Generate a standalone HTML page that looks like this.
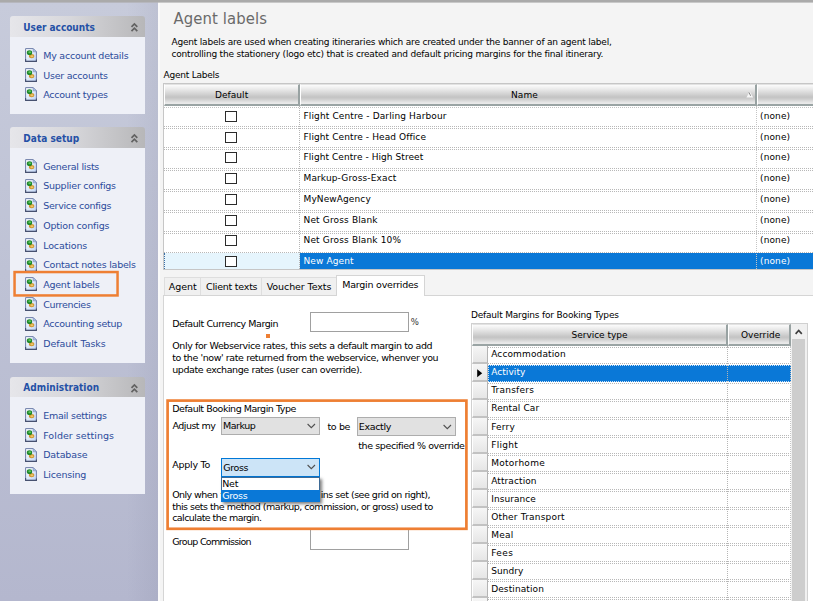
<!DOCTYPE html>
<html lang="en"><head><meta charset="utf-8"><title>Agent labels</title>
<style>
html,body{margin:0;padding:0}
body{width:813px;height:601px;overflow:hidden;position:relative;background:#fff;font-family:"DejaVu Sans","Liberation Sans",sans-serif;font-size:9px}
div{position:absolute;box-sizing:border-box}
.t{white-space:nowrap}
svg{position:absolute;overflow:visible}
.hd{background:linear-gradient(to bottom,#fbfbfb 0%,#efefef 16%,#d4d4d4 46%,#c3c3c3 64%,#cdcdcd 74%,#e6e6e6 92%,#ebebeb 100%);border-top:1px solid #e2e2e2;border-right:2px solid #98a2a2;border-bottom:2px solid #9aa4a4;border-left:1px solid #fff}
.rh{background:linear-gradient(to bottom,#f6f6f6,#e6e6e6);border-right:1px solid #b4b4b4;border-bottom:2px solid #c2c2c2;border-left:1px solid #fff}
.combo{background:#e1e1e1;border:1px solid #adadad}
.inp{background:#fff;border:1px solid #a0a0a0}
</style></head><body>
<svg width="0" height="0" style="left:0;top:0"><defs><linearGradient id="pg" x1="0" y1="0" x2="1" y2="1"><stop offset="0" stop-color="#ffffff"/><stop offset="1" stop-color="#bfd5f6"/></linearGradient></defs></svg>

<div style="left:0px;top:0px;width:813px;height:2px;background:#aaaaaa"></div>
<div style="left:0px;top:3px;width:158px;height:598px;background:linear-gradient(to right,rgba(0,0,0,0) 80%,rgba(40,40,80,.06) 100%),linear-gradient(to bottom,#c7cbdb 0%,#bec2d5 45%,#b4b7ce 100%)"></div>
<div style="left:158px;top:3px;width:655px;height:598px;background:#f4f4f4"></div>
<div style="left:158px;top:3px;width:2px;height:598px;background:#fafafa"></div>
<div style="left:0px;top:2px;width:158px;height:1px;background:#b6b7be"></div>
<div style="left:158px;top:2px;width:655px;height:1px;background:#c8c8c8"></div>
<div style="left:10px;top:16px;width:135px;height:21px;background:linear-gradient(to right,#e6e6ea 0%,#d7d7db 45%,#b7b7b9 100%);border-radius:3px 3px 0 0"></div>
<div style="left:10px;top:37px;width:135px;height:77px;background:#eef0f7"></div>
<div class="t" style="left:23.3px;top:20.8px;line-height:14px;font-size:10px;color:#2450a6;font-weight:bold;font-family:'DejaVu Sans Condensed','Liberation Sans',sans-serif;letter-spacing:-0.02px;">User accounts</div>
<svg style="left:130.5px;top:22.5px" width="7" height="9" viewBox="0 0 7 9"><path d="M0.5 3.9L3.4 1L6.3 3.9M0.5 8.1L3.4 5.2L6.3 8.1" fill="none" stroke="#626262" stroke-width="1.7"/></svg>
<svg style="left:25px;top:48px" width="12" height="14" viewBox="0 0 12 14">
<path d="M0.6 0.6H8.2L11.4 3.8V13.4H0.6Z" fill="url(#pg)" stroke="#6f7ea8" stroke-width="1"/>
<path d="M0.6 11V13.4H11.4V11.5" fill="none" stroke="#47516f" stroke-width="1.1"/>
<path d="M8.2 0.6V3.8H11.4Z" fill="#b3ccf3" stroke="#7f8fb8" stroke-width=".7"/>
<ellipse cx="6.6" cy="8.1" rx="2.7" ry="2.2" fill="#cf9732"/>
<ellipse cx="6.9" cy="8.3" rx="1.5" ry="1" fill="#ecc66b"/>
<ellipse cx="4.5" cy="4.7" rx="2.7" ry="2.4" fill="#21882b"/>
<ellipse cx="4.7" cy="4.3" rx="1.4" ry="1" fill="#5fc55d"/>
</svg>
<div class="t" style="left:43.2px;top:49.0px;line-height:14px;font-size:9.5px;color:#2b4b9b;letter-spacing:-0.23px;">My account details</div>
<svg style="left:25px;top:68px" width="12" height="14" viewBox="0 0 12 14">
<path d="M0.6 0.6H8.2L11.4 3.8V13.4H0.6Z" fill="url(#pg)" stroke="#6f7ea8" stroke-width="1"/>
<path d="M0.6 11V13.4H11.4V11.5" fill="none" stroke="#47516f" stroke-width="1.1"/>
<path d="M8.2 0.6V3.8H11.4Z" fill="#b3ccf3" stroke="#7f8fb8" stroke-width=".7"/>
<ellipse cx="6.6" cy="8.1" rx="2.7" ry="2.2" fill="#cf9732"/>
<ellipse cx="6.9" cy="8.3" rx="1.5" ry="1" fill="#ecc66b"/>
<ellipse cx="4.5" cy="4.7" rx="2.7" ry="2.4" fill="#21882b"/>
<ellipse cx="4.7" cy="4.3" rx="1.4" ry="1" fill="#5fc55d"/>
</svg>
<div class="t" style="left:43.2px;top:69.0px;line-height:14px;font-size:9.5px;color:#2b4b9b;letter-spacing:-0.22px;">User accounts</div>
<svg style="left:25px;top:87px" width="12" height="14" viewBox="0 0 12 14">
<path d="M0.6 0.6H8.2L11.4 3.8V13.4H0.6Z" fill="url(#pg)" stroke="#6f7ea8" stroke-width="1"/>
<path d="M0.6 11V13.4H11.4V11.5" fill="none" stroke="#47516f" stroke-width="1.1"/>
<path d="M8.2 0.6V3.8H11.4Z" fill="#b3ccf3" stroke="#7f8fb8" stroke-width=".7"/>
<ellipse cx="6.6" cy="8.1" rx="2.7" ry="2.2" fill="#cf9732"/>
<ellipse cx="6.9" cy="8.3" rx="1.5" ry="1" fill="#ecc66b"/>
<ellipse cx="4.5" cy="4.7" rx="2.7" ry="2.4" fill="#21882b"/>
<ellipse cx="4.7" cy="4.3" rx="1.4" ry="1" fill="#5fc55d"/>
</svg>
<div class="t" style="left:43.2px;top:88.0px;line-height:14px;font-size:9.5px;color:#2b4b9b;letter-spacing:-0.23px;">Account types</div>
<div style="left:10px;top:127px;width:135px;height:21px;background:linear-gradient(to right,#e6e6ea 0%,#d7d7db 45%,#b7b7b9 100%);border-radius:3px 3px 0 0"></div>
<div style="left:10px;top:148px;width:135px;height:215px;background:#eef0f7"></div>
<div class="t" style="left:23.3px;top:131.8px;line-height:14px;font-size:10px;color:#2450a6;font-weight:bold;font-family:'DejaVu Sans Condensed','Liberation Sans',sans-serif;letter-spacing:0.02px;">Data setup</div>
<svg style="left:130.5px;top:133.5px" width="7" height="9" viewBox="0 0 7 9"><path d="M0.5 3.9L3.4 1L6.3 3.9M0.5 8.1L3.4 5.2L6.3 8.1" fill="none" stroke="#626262" stroke-width="1.7"/></svg>
<svg style="left:25px;top:159px" width="12" height="14" viewBox="0 0 12 14">
<path d="M0.6 0.6H8.2L11.4 3.8V13.4H0.6Z" fill="url(#pg)" stroke="#6f7ea8" stroke-width="1"/>
<path d="M0.6 11V13.4H11.4V11.5" fill="none" stroke="#47516f" stroke-width="1.1"/>
<path d="M8.2 0.6V3.8H11.4Z" fill="#b3ccf3" stroke="#7f8fb8" stroke-width=".7"/>
<ellipse cx="6.6" cy="8.1" rx="2.7" ry="2.2" fill="#cf9732"/>
<ellipse cx="6.9" cy="8.3" rx="1.5" ry="1" fill="#ecc66b"/>
<ellipse cx="4.5" cy="4.7" rx="2.7" ry="2.4" fill="#21882b"/>
<ellipse cx="4.7" cy="4.3" rx="1.4" ry="1" fill="#5fc55d"/>
</svg>
<div class="t" style="left:43.2px;top:160.0px;line-height:14px;font-size:9.5px;color:#2b4b9b;letter-spacing:-0.27px;">General lists</div>
<svg style="left:25px;top:179px" width="12" height="14" viewBox="0 0 12 14">
<path d="M0.6 0.6H8.2L11.4 3.8V13.4H0.6Z" fill="url(#pg)" stroke="#6f7ea8" stroke-width="1"/>
<path d="M0.6 11V13.4H11.4V11.5" fill="none" stroke="#47516f" stroke-width="1.1"/>
<path d="M8.2 0.6V3.8H11.4Z" fill="#b3ccf3" stroke="#7f8fb8" stroke-width=".7"/>
<ellipse cx="6.6" cy="8.1" rx="2.7" ry="2.2" fill="#cf9732"/>
<ellipse cx="6.9" cy="8.3" rx="1.5" ry="1" fill="#ecc66b"/>
<ellipse cx="4.5" cy="4.7" rx="2.7" ry="2.4" fill="#21882b"/>
<ellipse cx="4.7" cy="4.3" rx="1.4" ry="1" fill="#5fc55d"/>
</svg>
<div class="t" style="left:43.2px;top:179.0px;line-height:14px;font-size:9.5px;color:#2b4b9b;letter-spacing:-0.22px;">Supplier configs</div>
<svg style="left:25px;top:198px" width="12" height="14" viewBox="0 0 12 14">
<path d="M0.6 0.6H8.2L11.4 3.8V13.4H0.6Z" fill="url(#pg)" stroke="#6f7ea8" stroke-width="1"/>
<path d="M0.6 11V13.4H11.4V11.5" fill="none" stroke="#47516f" stroke-width="1.1"/>
<path d="M8.2 0.6V3.8H11.4Z" fill="#b3ccf3" stroke="#7f8fb8" stroke-width=".7"/>
<ellipse cx="6.6" cy="8.1" rx="2.7" ry="2.2" fill="#cf9732"/>
<ellipse cx="6.9" cy="8.3" rx="1.5" ry="1" fill="#ecc66b"/>
<ellipse cx="4.5" cy="4.7" rx="2.7" ry="2.4" fill="#21882b"/>
<ellipse cx="4.7" cy="4.3" rx="1.4" ry="1" fill="#5fc55d"/>
</svg>
<div class="t" style="left:43.2px;top:199.0px;line-height:14px;font-size:9.5px;color:#2b4b9b;letter-spacing:-0.28px;">Service configs</div>
<svg style="left:25px;top:218px" width="12" height="14" viewBox="0 0 12 14">
<path d="M0.6 0.6H8.2L11.4 3.8V13.4H0.6Z" fill="url(#pg)" stroke="#6f7ea8" stroke-width="1"/>
<path d="M0.6 11V13.4H11.4V11.5" fill="none" stroke="#47516f" stroke-width="1.1"/>
<path d="M8.2 0.6V3.8H11.4Z" fill="#b3ccf3" stroke="#7f8fb8" stroke-width=".7"/>
<ellipse cx="6.6" cy="8.1" rx="2.7" ry="2.2" fill="#cf9732"/>
<ellipse cx="6.9" cy="8.3" rx="1.5" ry="1" fill="#ecc66b"/>
<ellipse cx="4.5" cy="4.7" rx="2.7" ry="2.4" fill="#21882b"/>
<ellipse cx="4.7" cy="4.3" rx="1.4" ry="1" fill="#5fc55d"/>
</svg>
<div class="t" style="left:43.2px;top:219.0px;line-height:14px;font-size:9.5px;color:#2b4b9b;letter-spacing:-0.19px;">Option configs</div>
<svg style="left:25px;top:238px" width="12" height="14" viewBox="0 0 12 14">
<path d="M0.6 0.6H8.2L11.4 3.8V13.4H0.6Z" fill="url(#pg)" stroke="#6f7ea8" stroke-width="1"/>
<path d="M0.6 11V13.4H11.4V11.5" fill="none" stroke="#47516f" stroke-width="1.1"/>
<path d="M8.2 0.6V3.8H11.4Z" fill="#b3ccf3" stroke="#7f8fb8" stroke-width=".7"/>
<ellipse cx="6.6" cy="8.1" rx="2.7" ry="2.2" fill="#cf9732"/>
<ellipse cx="6.9" cy="8.3" rx="1.5" ry="1" fill="#ecc66b"/>
<ellipse cx="4.5" cy="4.7" rx="2.7" ry="2.4" fill="#21882b"/>
<ellipse cx="4.7" cy="4.3" rx="1.4" ry="1" fill="#5fc55d"/>
</svg>
<div class="t" style="left:43.2px;top:239.0px;line-height:14px;font-size:9.5px;color:#2b4b9b;letter-spacing:-0.13px;">Locations</div>
<svg style="left:25px;top:258px" width="12" height="14" viewBox="0 0 12 14">
<path d="M0.6 0.6H8.2L11.4 3.8V13.4H0.6Z" fill="url(#pg)" stroke="#6f7ea8" stroke-width="1"/>
<path d="M0.6 11V13.4H11.4V11.5" fill="none" stroke="#47516f" stroke-width="1.1"/>
<path d="M8.2 0.6V3.8H11.4Z" fill="#b3ccf3" stroke="#7f8fb8" stroke-width=".7"/>
<ellipse cx="6.6" cy="8.1" rx="2.7" ry="2.2" fill="#cf9732"/>
<ellipse cx="6.9" cy="8.3" rx="1.5" ry="1" fill="#ecc66b"/>
<ellipse cx="4.5" cy="4.7" rx="2.7" ry="2.4" fill="#21882b"/>
<ellipse cx="4.7" cy="4.3" rx="1.4" ry="1" fill="#5fc55d"/>
</svg>
<div class="t" style="left:43.2px;top:258.0px;line-height:14px;font-size:9.5px;color:#2b4b9b;letter-spacing:-0.24px;">Contact notes labels</div>
<svg style="left:25px;top:277px" width="12" height="14" viewBox="0 0 12 14">
<path d="M0.6 0.6H8.2L11.4 3.8V13.4H0.6Z" fill="url(#pg)" stroke="#6f7ea8" stroke-width="1"/>
<path d="M0.6 11V13.4H11.4V11.5" fill="none" stroke="#47516f" stroke-width="1.1"/>
<path d="M8.2 0.6V3.8H11.4Z" fill="#b3ccf3" stroke="#7f8fb8" stroke-width=".7"/>
<ellipse cx="6.6" cy="8.1" rx="2.7" ry="2.2" fill="#cf9732"/>
<ellipse cx="6.9" cy="8.3" rx="1.5" ry="1" fill="#ecc66b"/>
<ellipse cx="4.5" cy="4.7" rx="2.7" ry="2.4" fill="#21882b"/>
<ellipse cx="4.7" cy="4.3" rx="1.4" ry="1" fill="#5fc55d"/>
</svg>
<div class="t" style="left:43.2px;top:278.0px;line-height:14px;font-size:9.5px;color:#2b4b9b;letter-spacing:-0.23px;">Agent labels</div>
<svg style="left:25px;top:297px" width="12" height="14" viewBox="0 0 12 14">
<path d="M0.6 0.6H8.2L11.4 3.8V13.4H0.6Z" fill="url(#pg)" stroke="#6f7ea8" stroke-width="1"/>
<path d="M0.6 11V13.4H11.4V11.5" fill="none" stroke="#47516f" stroke-width="1.1"/>
<path d="M8.2 0.6V3.8H11.4Z" fill="#b3ccf3" stroke="#7f8fb8" stroke-width=".7"/>
<ellipse cx="6.6" cy="8.1" rx="2.7" ry="2.2" fill="#cf9732"/>
<ellipse cx="6.9" cy="8.3" rx="1.5" ry="1" fill="#ecc66b"/>
<ellipse cx="4.5" cy="4.7" rx="2.7" ry="2.4" fill="#21882b"/>
<ellipse cx="4.7" cy="4.3" rx="1.4" ry="1" fill="#5fc55d"/>
</svg>
<div class="t" style="left:43.2px;top:298.0px;line-height:14px;font-size:9.5px;color:#2b4b9b;letter-spacing:-0.33px;">Currencies</div>
<svg style="left:25px;top:317px" width="12" height="14" viewBox="0 0 12 14">
<path d="M0.6 0.6H8.2L11.4 3.8V13.4H0.6Z" fill="url(#pg)" stroke="#6f7ea8" stroke-width="1"/>
<path d="M0.6 11V13.4H11.4V11.5" fill="none" stroke="#47516f" stroke-width="1.1"/>
<path d="M8.2 0.6V3.8H11.4Z" fill="#b3ccf3" stroke="#7f8fb8" stroke-width=".7"/>
<ellipse cx="6.6" cy="8.1" rx="2.7" ry="2.2" fill="#cf9732"/>
<ellipse cx="6.9" cy="8.3" rx="1.5" ry="1" fill="#ecc66b"/>
<ellipse cx="4.5" cy="4.7" rx="2.7" ry="2.4" fill="#21882b"/>
<ellipse cx="4.7" cy="4.3" rx="1.4" ry="1" fill="#5fc55d"/>
</svg>
<div class="t" style="left:43.2px;top:317.0px;line-height:14px;font-size:9.5px;color:#2b4b9b;letter-spacing:-0.23px;">Accounting setup</div>
<svg style="left:25px;top:336px" width="12" height="14" viewBox="0 0 12 14">
<path d="M0.6 0.6H8.2L11.4 3.8V13.4H0.6Z" fill="url(#pg)" stroke="#6f7ea8" stroke-width="1"/>
<path d="M0.6 11V13.4H11.4V11.5" fill="none" stroke="#47516f" stroke-width="1.1"/>
<path d="M8.2 0.6V3.8H11.4Z" fill="#b3ccf3" stroke="#7f8fb8" stroke-width=".7"/>
<ellipse cx="6.6" cy="8.1" rx="2.7" ry="2.2" fill="#cf9732"/>
<ellipse cx="6.9" cy="8.3" rx="1.5" ry="1" fill="#ecc66b"/>
<ellipse cx="4.5" cy="4.7" rx="2.7" ry="2.4" fill="#21882b"/>
<ellipse cx="4.7" cy="4.3" rx="1.4" ry="1" fill="#5fc55d"/>
</svg>
<div class="t" style="left:43.2px;top:337.0px;line-height:14px;font-size:9.5px;color:#2b4b9b;letter-spacing:-0.05px;">Default Tasks</div>
<div style="left:10px;top:377px;width:135px;height:20px;background:linear-gradient(to right,#e6e6ea 0%,#d7d7db 45%,#b7b7b9 100%);border-radius:3px 3px 0 0"></div>
<div style="left:10px;top:397px;width:135px;height:97px;background:#eef0f7"></div>
<div class="t" style="left:23.3px;top:381.2px;line-height:14px;font-size:10px;color:#2450a6;font-weight:bold;font-family:'DejaVu Sans Condensed','Liberation Sans',sans-serif;letter-spacing:0.02px;">Administration</div>
<svg style="left:130.5px;top:383.5px" width="7" height="9" viewBox="0 0 7 9"><path d="M0.5 3.9L3.4 1L6.3 3.9M0.5 8.1L3.4 5.2L6.3 8.1" fill="none" stroke="#626262" stroke-width="1.7"/></svg>
<svg style="left:25px;top:408px" width="12" height="14" viewBox="0 0 12 14">
<path d="M0.6 0.6H8.2L11.4 3.8V13.4H0.6Z" fill="url(#pg)" stroke="#6f7ea8" stroke-width="1"/>
<path d="M0.6 11V13.4H11.4V11.5" fill="none" stroke="#47516f" stroke-width="1.1"/>
<path d="M8.2 0.6V3.8H11.4Z" fill="#b3ccf3" stroke="#7f8fb8" stroke-width=".7"/>
<ellipse cx="6.6" cy="8.1" rx="2.7" ry="2.2" fill="#cf9732"/>
<ellipse cx="6.9" cy="8.3" rx="1.5" ry="1" fill="#ecc66b"/>
<ellipse cx="4.5" cy="4.7" rx="2.7" ry="2.4" fill="#21882b"/>
<ellipse cx="4.7" cy="4.3" rx="1.4" ry="1" fill="#5fc55d"/>
</svg>
<div class="t" style="left:43.2px;top:409.0px;line-height:14px;font-size:9.5px;color:#2b4b9b;letter-spacing:-0.26px;">Email settings</div>
<svg style="left:25px;top:428px" width="12" height="14" viewBox="0 0 12 14">
<path d="M0.6 0.6H8.2L11.4 3.8V13.4H0.6Z" fill="url(#pg)" stroke="#6f7ea8" stroke-width="1"/>
<path d="M0.6 11V13.4H11.4V11.5" fill="none" stroke="#47516f" stroke-width="1.1"/>
<path d="M8.2 0.6V3.8H11.4Z" fill="#b3ccf3" stroke="#7f8fb8" stroke-width=".7"/>
<ellipse cx="6.6" cy="8.1" rx="2.7" ry="2.2" fill="#cf9732"/>
<ellipse cx="6.9" cy="8.3" rx="1.5" ry="1" fill="#ecc66b"/>
<ellipse cx="4.5" cy="4.7" rx="2.7" ry="2.4" fill="#21882b"/>
<ellipse cx="4.7" cy="4.3" rx="1.4" ry="1" fill="#5fc55d"/>
</svg>
<div class="t" style="left:43.2px;top:429.0px;line-height:14px;font-size:9.5px;color:#2b4b9b;letter-spacing:0.04px;">Folder settings</div>
<svg style="left:25px;top:448px" width="12" height="14" viewBox="0 0 12 14">
<path d="M0.6 0.6H8.2L11.4 3.8V13.4H0.6Z" fill="url(#pg)" stroke="#6f7ea8" stroke-width="1"/>
<path d="M0.6 11V13.4H11.4V11.5" fill="none" stroke="#47516f" stroke-width="1.1"/>
<path d="M8.2 0.6V3.8H11.4Z" fill="#b3ccf3" stroke="#7f8fb8" stroke-width=".7"/>
<ellipse cx="6.6" cy="8.1" rx="2.7" ry="2.2" fill="#cf9732"/>
<ellipse cx="6.9" cy="8.3" rx="1.5" ry="1" fill="#ecc66b"/>
<ellipse cx="4.5" cy="4.7" rx="2.7" ry="2.4" fill="#21882b"/>
<ellipse cx="4.7" cy="4.3" rx="1.4" ry="1" fill="#5fc55d"/>
</svg>
<div class="t" style="left:43.2px;top:448.0px;line-height:14px;font-size:9.5px;color:#2b4b9b;letter-spacing:-0.13px;">Database</div>
<svg style="left:25px;top:467px" width="12" height="14" viewBox="0 0 12 14">
<path d="M0.6 0.6H8.2L11.4 3.8V13.4H0.6Z" fill="url(#pg)" stroke="#6f7ea8" stroke-width="1"/>
<path d="M0.6 11V13.4H11.4V11.5" fill="none" stroke="#47516f" stroke-width="1.1"/>
<path d="M8.2 0.6V3.8H11.4Z" fill="#b3ccf3" stroke="#7f8fb8" stroke-width=".7"/>
<ellipse cx="6.6" cy="8.1" rx="2.7" ry="2.2" fill="#cf9732"/>
<ellipse cx="6.9" cy="8.3" rx="1.5" ry="1" fill="#ecc66b"/>
<ellipse cx="4.5" cy="4.7" rx="2.7" ry="2.4" fill="#21882b"/>
<ellipse cx="4.7" cy="4.3" rx="1.4" ry="1" fill="#5fc55d"/>
</svg>
<div class="t" style="left:43.2px;top:468.0px;line-height:14px;font-size:9.5px;color:#2b4b9b;letter-spacing:-0.19px;">Licensing</div>
<svg style="left:0;top:0" width="813" height="601"><rect x="14.55" y="272.05" width="103" height="23.4" fill="none" stroke="#ee7f33" stroke-width="2.5"/></svg>
<div class="t" style="left:173.4px;top:6.6px;line-height:24px;font-size:16.5px;color:#6a6a6a;font-family:'DejaVu Sans Condensed','Liberation Sans',sans-serif;letter-spacing:0.12px;">Agent labels</div>
<div class="t" style="left:171.5px;top:35.2px;line-height:14px;letter-spacing:-0.20px;">Agent labels are used when creating itineraries which are created under the banner of an agent label,</div>
<div class="t" style="left:171.5px;top:47.2px;line-height:14px;letter-spacing:-0.20px;">controlling the stationery (logo etc) that is created and default pricing margins for the final itinerary.</div>
<div class="t" style="left:163.5px;top:67.5px;line-height:14px;letter-spacing:-0.22px;">Agent Labels</div>
<div style="left:163px;top:83px;width:660px;height:187px;background:#fff;border:1px solid #c6c6c6"></div>
<div style="left:225px;top:111px;width:12px;height:11px;background:#fff;border:1px solid #2b2b2b"></div>
<div class="t" style="left:303.5px;top:109.0px;line-height:14px;letter-spacing:0.13px;">Flight Centre - Darling Harbour</div>
<div class="t" style="left:760.0px;top:109.0px;line-height:14px;letter-spacing:0.12px;">(none)</div>
<div style="left:225px;top:132px;width:12px;height:11px;background:#fff;border:1px solid #2b2b2b"></div>
<div class="t" style="left:303.5px;top:129.5px;line-height:14px;letter-spacing:0.10px;">Flight Centre - Head Office</div>
<div class="t" style="left:760.0px;top:129.5px;line-height:14px;letter-spacing:0.12px;">(none)</div>
<div style="left:225px;top:152px;width:12px;height:11px;background:#fff;border:1px solid #2b2b2b"></div>
<div class="t" style="left:303.5px;top:150.3px;line-height:14px;letter-spacing:0.07px;">Flight Centre - High Street</div>
<div class="t" style="left:760.0px;top:150.3px;line-height:14px;letter-spacing:0.12px;">(none)</div>
<div style="left:225px;top:173px;width:12px;height:11px;background:#fff;border:1px solid #2b2b2b"></div>
<div class="t" style="left:303.5px;top:171.0px;line-height:14px;letter-spacing:0.13px;">Markup-Gross-Exact</div>
<div class="t" style="left:760.0px;top:171.0px;line-height:14px;letter-spacing:0.12px;">(none)</div>
<div style="left:225px;top:194px;width:12px;height:11px;background:#fff;border:1px solid #2b2b2b"></div>
<div class="t" style="left:303.5px;top:191.8px;line-height:14px;letter-spacing:0.11px;">MyNewAgency</div>
<div class="t" style="left:760.0px;top:191.8px;line-height:14px;letter-spacing:0.12px;">(none)</div>
<div style="left:225px;top:215px;width:12px;height:11px;background:#fff;border:1px solid #2b2b2b"></div>
<div class="t" style="left:303.5px;top:212.5px;line-height:14px;letter-spacing:0.15px;">Net Gross Blank</div>
<div class="t" style="left:760.0px;top:212.5px;line-height:14px;letter-spacing:0.12px;">(none)</div>
<div style="left:225px;top:235px;width:12px;height:11px;background:#fff;border:1px solid #2b2b2b"></div>
<div class="t" style="left:303.5px;top:233.2px;line-height:14px;letter-spacing:0.15px;">Net Gross Blank 10%</div>
<div class="t" style="left:760.0px;top:233.2px;line-height:14px;letter-spacing:0.12px;">(none)</div>
<div style="left:164px;top:253px;width:136px;height:16px;background:#e6f5fd"></div>
<div style="left:300px;top:253px;width:513px;height:16px;background:#0a78d7"></div>
<div style="left:225px;top:256px;width:12px;height:11px;background:#fff;border:1px solid #2b2b2b"></div>
<div class="t" style="left:303.5px;top:253.6px;line-height:14px;color:#fff;letter-spacing:0.12px;">New Agent</div>
<div class="t" style="left:760.0px;top:253.6px;line-height:14px;color:#fff;letter-spacing:0.12px;">(none)</div>
<div style="left:164px;top:107px;width:649px;height:1px;border-top:1px dotted #c4c4c4"></div>
<div style="left:164px;top:126px;width:649px;height:1px;border-top:1px dotted #b8b8b8"></div>
<div style="left:164px;top:128px;width:649px;height:1px;border-top:1px dotted #b8b8b8"></div>
<div style="left:164px;top:147px;width:649px;height:1px;border-top:1px dotted #b8b8b8"></div>
<div style="left:164px;top:149px;width:649px;height:1px;border-top:1px dotted #b8b8b8"></div>
<div style="left:164px;top:168px;width:649px;height:1px;border-top:1px dotted #b8b8b8"></div>
<div style="left:164px;top:170px;width:649px;height:1px;border-top:1px dotted #b8b8b8"></div>
<div style="left:164px;top:189px;width:649px;height:1px;border-top:1px dotted #b8b8b8"></div>
<div style="left:164px;top:191px;width:649px;height:1px;border-top:1px dotted #b8b8b8"></div>
<div style="left:164px;top:210px;width:649px;height:1px;border-top:1px dotted #b8b8b8"></div>
<div style="left:164px;top:212px;width:649px;height:1px;border-top:1px dotted #b8b8b8"></div>
<div style="left:164px;top:231px;width:649px;height:1px;border-top:1px dotted #b8b8b8"></div>
<div style="left:164px;top:233px;width:649px;height:1px;border-top:1px dotted #b8b8b8"></div>
<div style="left:164px;top:252px;width:649px;height:1px;border-top:1px dotted #b8b8b8"></div>
<div style="left:299px;top:106px;width:1px;height:163px;border-left:1px dotted #b5b5b5"></div>
<div style="left:756px;top:106px;width:1px;height:163px;border-left:1px dotted #c5c5c5"></div>
<div style="left:164px;top:253px;width:1px;height:16px;border-left:1px dotted #3a6ea5"></div>
<div class="hd" style="left:164px;top:84px;width:136px;height:22px"></div>
<div class="hd" style="left:300px;top:84px;width:457px;height:22px"></div>
<div class="hd" style="left:757px;top:84px;width:70px;height:22px"></div>
<div class="t" style="left:215.1px;top:87.5px;line-height:14px;letter-spacing:0.03px;">Default</div>
<div class="t" style="left:511.0px;top:87.5px;line-height:14px;letter-spacing:0.11px;">Name</div>
<svg style="left:746px;top:91px" width="8" height="7" viewBox="0 0 8 7"><path d="M3.8 0.6L7.2 6.6H0.4Z" fill="#f6f6f6"/><path d="M3 1.4L4.6 4.8" fill="none" stroke="#8a8a8a" stroke-width="1"/></svg>
<div style="left:163px;top:295px;width:660px;height:320px;background:#fff;border:1px solid #d5d5d5"></div>
<div style="left:164px;top:277px;width:37px;height:18px;background:#f0f0f0;border:1px solid #dedede;border-bottom:none"></div>
<div class="t" style="left:168.7px;top:280.0px;line-height:14px;font-size:9.5px;letter-spacing:-0.04px;">Agent</div>
<div style="left:200px;top:277px;width:62px;height:18px;background:#f0f0f0;border:1px solid #dedede;border-bottom:none"></div>
<div class="t" style="left:206.1px;top:280.0px;line-height:14px;font-size:9.5px;letter-spacing:-0.25px;">Client texts</div>
<div style="left:261px;top:277px;width:76px;height:18px;background:#f0f0f0;border:1px solid #dedede;border-bottom:none"></div>
<div class="t" style="left:266.7px;top:280.0px;line-height:14px;font-size:9.5px;letter-spacing:-0.09px;">Voucher Texts</div>
<div style="left:336px;top:275px;width:89px;height:21px;background:#fff;border:1px solid #d5d5d5;border-bottom:none"></div>
<div class="t" style="left:342.3px;top:278.0px;line-height:14px;font-size:9.5px;letter-spacing:-0.24px;">Margin overrides</div>
<div class="t" style="left:172.2px;top:317.0px;line-height:14px;font-size:9.5px;letter-spacing:-0.44px;">Default Currency Margin</div>
<div class="inp" style="left:310px;top:312px;width:99px;height:20px"></div>
<div class="t" style="left:410.7px;top:315.0px;line-height:14px;font-size:9.5px;color:#333;font-family:'DejaVu Sans Condensed','Liberation Sans',sans-serif;letter-spacing:-0.23px;letter-spacing:0;">%</div>
<div style="left:266px;top:334px;width:4px;height:4px;background:#ee7f33"></div>
<div class="t" style="left:172.2px;top:339.0px;line-height:14px;font-size:9.5px;letter-spacing:-0.40px;">Only for Webservice rates, this sets a default margin to add</div>
<div class="t" style="left:172.2px;top:351.0px;line-height:14px;font-size:9.5px;letter-spacing:-0.41px;">to the 'now' rate returned from the webservice, whenver you</div>
<div class="t" style="left:172.2px;top:363.0px;line-height:14px;font-size:9.5px;letter-spacing:-0.40px;">update exchange rates (user can override).</div>
<div class="t" style="left:172.2px;top:402.0px;line-height:14px;font-size:9.5px;letter-spacing:-0.47px;">Default Booking Margin Type</div>
<div class="t" style="left:172.5px;top:419.0px;line-height:14px;font-size:9.5px;letter-spacing:-0.53px;">Adjust my</div>
<div class="combo" style="left:221px;top:417px;width:99px;height:18px"></div>
<div class="t" style="left:223.0px;top:419.0px;line-height:14px;font-size:9.5px;letter-spacing:-0.48px;">Markup</div>
<svg style="left:306px;top:423px" width="10" height="6" viewBox="0 0 10 6"><path d="M1.6 1L5.3 4.7L9 1" fill="none" stroke="#505050" stroke-width="1.1"/></svg>
<div class="t" style="left:327.5px;top:420.0px;line-height:14px;font-size:9.5px;letter-spacing:-0.37px;">to be</div>
<div class="combo" style="left:357px;top:417px;width:99px;height:19px"></div>
<div class="t" style="left:358.8px;top:420.0px;line-height:14px;font-size:9.5px;letter-spacing:-0.34px;">Exactly</div>
<svg style="left:442px;top:423.5px" width="10" height="6" viewBox="0 0 10 6"><path d="M1.6 1L5.3 4.7L9 1" fill="none" stroke="#505050" stroke-width="1.1"/></svg>
<div class="t" style="left:358.2px;top:439.0px;line-height:14px;font-size:9.5px;letter-spacing:-0.39px;">the specified % override</div>
<div class="t" style="left:172.3px;top:458.0px;line-height:14px;font-size:9.5px;letter-spacing:-0.26px;">Apply To</div>
<div class="t" style="left:172.2px;top:488.0px;line-height:14px;font-size:9.5px;letter-spacing:-0.57px;">Only when</div>
<div class="t" style="left:220.5px;top:488.0px;line-height:14px;font-size:9.5px;letter-spacing:-0.23px;">there are no marg</div>
<div class="t" style="left:320.7px;top:488.0px;line-height:14px;font-size:9.5px;letter-spacing:-0.49px;">ins set (see grid on right),</div>
<div class="t" style="left:172.2px;top:500.0px;line-height:14px;font-size:9.5px;letter-spacing:-0.50px;">this sets the method (markup, commission, or gross) used to</div>
<div class="t" style="left:172.2px;top:511.0px;line-height:14px;font-size:9.5px;letter-spacing:-0.56px;">calculate the margin.</div>
<div class="t" style="left:172.2px;top:535.0px;line-height:14px;font-size:9.5px;letter-spacing:-0.70px;">Group Commission</div>
<div class="inp" style="left:310px;top:529px;width:99px;height:21px"></div>
<svg style="left:0;top:0" width="813" height="601"><rect x="167.6" y="400.6" width="298.8" height="128.2" fill="none" stroke="#ee7f33" stroke-width="2.7"/></svg>
<div style="left:221px;top:458px;width:99px;height:19px;background:#cce4f7;border:1px solid #0078d7"></div>
<div class="t" style="left:223.3px;top:461.0px;line-height:14px;font-size:9.5px;letter-spacing:-0.38px;">Gross</div>
<svg style="left:306px;top:464px" width="10" height="6" viewBox="0 0 10 6"><path d="M1.6 1L5.3 4.7L9 1" fill="none" stroke="#505050" stroke-width="1.1"/></svg>
<div style="left:221px;top:477px;width:99px;height:25px;background:#fff;border:1px solid #3d6a96;box-shadow:2px 2px 3px rgba(0,0,0,.5)"></div>
<div style="left:221px;top:489.5px;width:99px;height:12px;background:#0a78d7"></div>
<div class="t" style="left:222.2px;top:477.0px;line-height:14px;font-size:9.5px;letter-spacing:-0.20px;">Net</div>
<div class="t" style="left:222.2px;top:489.0px;line-height:14px;font-size:9.5px;color:#fff;letter-spacing:-0.34px;">Gross</div>
<div class="t" style="left:470.9px;top:307.9px;line-height:14px;letter-spacing:-0.18px;">Default Margins for Booking Types</div>
<div style="left:471px;top:323px;width:337px;height:290px;background:#fff;border:1px solid #d0d0d0"></div>
<div class="rh" style="left:472px;top:346px;width:16px;height:18px"></div>
<div style="left:488px;top:347px;width:303px;height:1px;border-top:1px dotted #b8b8b8"></div>
<div style="left:488px;top:363px;width:303px;height:1px;border-top:1px dotted #b8b8b8"></div>
<div class="t" style="left:491.2px;top:347.0px;line-height:14px;letter-spacing:0.13px;">Accommodation</div>
<div class="rh" style="left:472px;top:364px;width:16px;height:18px"></div>
<div style="left:488px;top:365px;width:303px;height:17px;background:#0a78d7;border:1px dotted #cfe3f5"></div>
<div class="t" style="left:491.2px;top:365.0px;line-height:14px;color:#fff;letter-spacing:0.07px;">Activity</div>
<div class="rh" style="left:472px;top:382px;width:16px;height:18px"></div>
<div style="left:488px;top:383px;width:303px;height:1px;border-top:1px dotted #b8b8b8"></div>
<div style="left:488px;top:399px;width:303px;height:1px;border-top:1px dotted #b8b8b8"></div>
<div class="t" style="left:491.2px;top:383.0px;line-height:14px;letter-spacing:0.22px;">Transfers</div>
<div class="rh" style="left:472px;top:400px;width:16px;height:18px"></div>
<div style="left:488px;top:401px;width:303px;height:1px;border-top:1px dotted #b8b8b8"></div>
<div style="left:488px;top:417px;width:303px;height:1px;border-top:1px dotted #b8b8b8"></div>
<div class="t" style="left:491.2px;top:401.0px;line-height:14px;letter-spacing:0.11px;">Rental Car</div>
<div class="rh" style="left:472px;top:418px;width:16px;height:18px"></div>
<div style="left:488px;top:419px;width:303px;height:1px;border-top:1px dotted #b8b8b8"></div>
<div style="left:488px;top:435px;width:303px;height:1px;border-top:1px dotted #b8b8b8"></div>
<div class="t" style="left:491.2px;top:420.0px;line-height:14px;letter-spacing:0.20px;">Ferry</div>
<div class="rh" style="left:472px;top:436px;width:16px;height:18px"></div>
<div style="left:488px;top:437px;width:303px;height:1px;border-top:1px dotted #b8b8b8"></div>
<div style="left:488px;top:453px;width:303px;height:1px;border-top:1px dotted #b8b8b8"></div>
<div class="t" style="left:491.2px;top:438.0px;line-height:14px;letter-spacing:0.28px;">Flight</div>
<div class="rh" style="left:472px;top:454px;width:16px;height:18px"></div>
<div style="left:488px;top:455px;width:303px;height:1px;border-top:1px dotted #b8b8b8"></div>
<div style="left:488px;top:471px;width:303px;height:1px;border-top:1px dotted #b8b8b8"></div>
<div class="t" style="left:491.2px;top:456.0px;line-height:14px;letter-spacing:0.27px;">Motorhome</div>
<div class="rh" style="left:472px;top:472px;width:16px;height:18px"></div>
<div style="left:488px;top:473px;width:303px;height:1px;border-top:1px dotted #b8b8b8"></div>
<div style="left:488px;top:489px;width:303px;height:1px;border-top:1px dotted #b8b8b8"></div>
<div class="t" style="left:491.2px;top:474.0px;line-height:14px;letter-spacing:0.10px;">Attraction</div>
<div class="rh" style="left:472px;top:490px;width:16px;height:18px"></div>
<div style="left:488px;top:491px;width:303px;height:1px;border-top:1px dotted #b8b8b8"></div>
<div style="left:488px;top:507px;width:303px;height:1px;border-top:1px dotted #b8b8b8"></div>
<div class="t" style="left:491.2px;top:492.0px;line-height:14px;letter-spacing:0.06px;">Insurance</div>
<div class="rh" style="left:472px;top:508px;width:16px;height:18px"></div>
<div style="left:488px;top:509px;width:303px;height:1px;border-top:1px dotted #b8b8b8"></div>
<div style="left:488px;top:525px;width:303px;height:1px;border-top:1px dotted #b8b8b8"></div>
<div class="t" style="left:491.2px;top:510.0px;line-height:14px;letter-spacing:0.20px;">Other Transport</div>
<div class="rh" style="left:472px;top:526px;width:16px;height:18px"></div>
<div style="left:488px;top:527px;width:303px;height:1px;border-top:1px dotted #b8b8b8"></div>
<div style="left:488px;top:543px;width:303px;height:1px;border-top:1px dotted #b8b8b8"></div>
<div class="t" style="left:491.2px;top:528.0px;line-height:14px;letter-spacing:0.29px;">Meal</div>
<div class="rh" style="left:472px;top:544px;width:16px;height:18px"></div>
<div style="left:488px;top:545px;width:303px;height:1px;border-top:1px dotted #b8b8b8"></div>
<div style="left:488px;top:561px;width:303px;height:1px;border-top:1px dotted #b8b8b8"></div>
<div class="t" style="left:491.2px;top:546.0px;line-height:14px;letter-spacing:0.41px;">Fees</div>
<div class="rh" style="left:472px;top:562px;width:16px;height:18px"></div>
<div style="left:488px;top:563px;width:303px;height:1px;border-top:1px dotted #b8b8b8"></div>
<div style="left:488px;top:579px;width:303px;height:1px;border-top:1px dotted #b8b8b8"></div>
<div class="t" style="left:491.2px;top:564.0px;line-height:14px;letter-spacing:0.04px;">Sundry</div>
<div class="rh" style="left:472px;top:580px;width:16px;height:18px"></div>
<div style="left:488px;top:581px;width:303px;height:1px;border-top:1px dotted #b8b8b8"></div>
<div style="left:488px;top:597px;width:303px;height:1px;border-top:1px dotted #b8b8b8"></div>
<div class="t" style="left:491.2px;top:582.0px;line-height:14px;letter-spacing:0.11px;">Destination</div>
<div class="rh" style="left:472px;top:598px;width:16px;height:18px"></div>
<div style="left:488px;top:599px;width:303px;height:1px;border-top:1px dotted #b8b8b8"></div>
<div style="left:488px;top:616px;width:303px;height:1px;border-top:1px dotted #b8b8b8"></div>
<div style="left:727px;top:346px;width:1px;height:260px;border-left:1px dotted #b5b5b5"></div>
<div style="left:790px;top:346px;width:1px;height:260px;border-left:1px dotted #c5c5c5"></div>
<svg style="left:477px;top:369.3px" width="6" height="9" viewBox="0 0 6 9"><path d="M0.2 0.2L5.2 4.2L0.2 8.2Z" fill="#000"/></svg>
<div class="hd" style="left:472px;top:324px;width:256px;height:22px"></div>
<div class="hd" style="left:728px;top:324px;width:63px;height:22px"></div>
<div class="t" style="left:571.5px;top:328.0px;line-height:14px;letter-spacing:-0.02px;">Service type</div>
<div class="t" style="left:740.9px;top:328.0px;line-height:14px;letter-spacing:0.06px;">Override</div>
<div style="left:791px;top:324px;width:16px;height:290px;background:#f0f0f0"></div>
<div style="left:792px;top:339px;width:13px;height:270px;background:#cdcdcd"></div>
<svg style="left:795px;top:329px" width="8" height="6" viewBox="0 0 8 6"><path d="M0.6 4.9L3.7 1.4L6.8 4.9" fill="none" stroke="#3c3c3c" stroke-width="1.6"/></svg>
</body></html>
